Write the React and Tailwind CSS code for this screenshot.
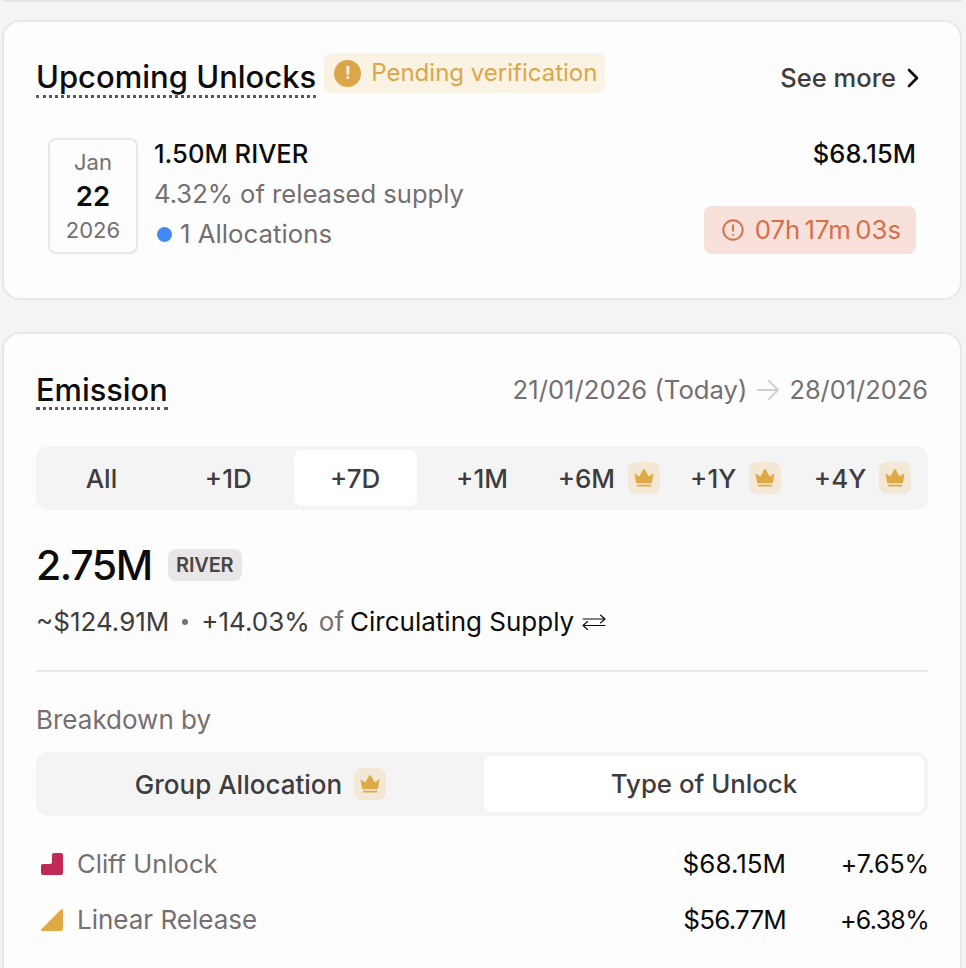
const FONT = "font-['Inter',sans-serif]";

function Crown({ className = "" }) {
  return (
    <span className={`flex h-8 w-8 shrink-0 items-center justify-center rounded-lg bg-[#f2e8d5] ${className}`}>
      <svg width="20" height="20" viewBox="0 0 20 20" fill="#dfa945">
        <path d="M.5 5.2 5.4 8.4 9.2 1.6a.9.9 0 0 1 1.6 0l3.8 6.8 4.9-3.2-1.6 9.5a.8.8 0 0 1-.8.6H2.9a.8.8 0 0 1-.8-.6Z" />
        <rect x="3" y="16.8" width="14" height="1.7" rx="0.4" />
      </svg>
    </span>
  );
}

function Tab({ label, active, crown }) {
  return (
    <div className={`flex h-[56px] flex-1 items-center justify-center gap-[13px] rounded-lg text-[26px] font-medium text-[#3f3c3d] ${active ? "bg-white" : ""}`}>
      <span>{label}</span>
      {crown && <Crown />}
    </div>
  );
}

function Row({ icon, label, usd, pct, labelClass, usdClass, pctClass }) {
  return (
    <div className="flex h-[56px] items-center">
      <span className="ml-[5px] flex w-[36px] shrink-0 items-center">{icon}</span>
      <span className={`flex-1 leading-[32px] text-[#766e70] ${labelClass}`}>{label}</span>
      <span className={`text-[26px] leading-[32px] text-[#0d0c0c] ${usdClass}`}>{usd}</span>
      <span className={`mr-[-1px] w-[143px] text-right text-[25px] leading-[32px] text-[#0d0c0c] ${pctClass}`}>{pct}</span>
    </div>
  );
}

export default function App() {
  return (
    <div className={`${FONT} h-[968px] w-[966px] overflow-hidden bg-[#f4f4f4] pr-[4px] pl-[2px]`}>
      <div className="h-[2px] rounded-b-lg border-b-2 border-[#e6e6e6] bg-[#fdfdfd]" />

      <section className="mt-[18px] h-[280px] rounded-[18px] border-2 border-[#e8e8e8] bg-[#fdfdfd] px-[32px]">
        <div className="flex items-start pt-[30px]">
          <h2 className="mt-[7px] border-b-[3px] border-dotted border-[#5c5757] text-[31px] leading-[36px] font-medium text-[#0d0c0c]">
            Upcoming Unlocks
          </h2>
          <div className="mt-[1px] ml-[8px] flex h-[40px] items-center gap-[10px] rounded-lg bg-[#faf2e3] pr-[8px] pl-[10px]">
            <span className="flex h-[27px] w-[27px] items-center justify-center rounded-full bg-[#dba64a] text-[17px] leading-none font-bold text-[#faf2e3]">!</span>
            <span className="text-[24px] text-[#dba64a]">Pending verification</span>
          </div>
          <div className="mt-[8px] mr-[8px] ml-auto flex items-center gap-[10px]">
            <span className="text-[25.5px] leading-[36px] font-medium text-[#3f3c3d]">See more</span>
            <svg width="14" height="22" viewBox="0 0 14 22" fill="none" stroke="#0d0c0c" strokeWidth="2.6" strokeLinecap="round" strokeLinejoin="round">
              <path d="M3 3l8 8-8 8" />
            </svg>
          </div>
        </div>

        <div className="mt-[36px] flex items-start pl-[12px]">
          <div className="mt-[4px] flex h-[116px] w-[90px] shrink-0 flex-col items-center justify-center rounded-lg border-2 border-[#e8e8e8] text-[#766e70]">
            <span className="text-[22px] leading-[33px]">Jan</span>
            <span className="text-[27.5px] leading-[34px] font-semibold text-[#0d0c0c]">22</span>
            <span className="mt-[1px] text-[22px] leading-[33px]">2026</span>
          </div>
          <div className="ml-[16px] flex flex-col">
            <span className="text-[25.6px] leading-[40px] font-medium text-[#0d0c0c]">1.50M RIVER</span>
            <span className="text-[25.6px] leading-[40px] text-[#766e70]">4.32% of released supply</span>
            <span className="flex items-center gap-[8px] text-[25.8px] leading-[40px] text-[#766e70]">
              <span className="ml-[3px] h-[15px] w-[15px] rounded-full bg-[#4389f5]" />
              1 Allocations
            </span>
          </div>
          <div className="mr-[12px] ml-auto flex flex-col items-end">
            <span className="text-[25.5px] leading-[40px] font-medium text-[#0d0c0c]">$68.15M</span>
            <div className="mt-[32px] flex h-[48px] items-center gap-[11px] rounded-lg bg-[#f7e1da] pr-[15px] pl-[18px] text-[25.8px] text-[#d4704a]">
              <svg width="22" height="22" viewBox="0 0 22 22" fill="none" stroke="#d4704a" strokeWidth="1.9" strokeLinecap="round">
                <circle cx="11" cy="11" r="9.7" />
                <path d="M11 6.2v5.6M11 15.6v.2" />
              </svg>
              <span className="[word-spacing:-3px]">07h 17m 03s</span>
            </div>
          </div>
        </div>
      </section>

      <section className="mt-[32px] h-[700px] rounded-[18px] border-2 border-[#e8e8e8] bg-[#fdfdfd] px-[32px] pt-[38px]">
        <div className="flex items-start justify-between">
          <h2 className="border-b-[3px] border-dotted border-[#5c5757] text-[30.8px] leading-[35px] font-medium text-[#0d0c0c]">
            Emission
          </h2>
          <div className="flex h-[36px] items-center text-[25.7px] text-[#766e70]">
            <span>21/01/2026 (Today)</span>
            <svg className="mx-[9px]" width="24" height="22" viewBox="0 0 24 22" fill="none" stroke="#d3cfd0" strokeWidth="2" strokeLinecap="round" strokeLinejoin="round">
              <path d="M2 11h20M13 2l9 9-9 9" />
            </svg>
            <span className="text-[25.4px]">28/01/2026</span>
          </div>
        </div>

        <div className="mt-[36px] flex h-[64px] items-center gap-[4px] rounded-xl bg-[#f4f4f4] px-[4px]">
          <Tab label="All" />
          <Tab label="+1D" />
          <Tab label="+7D" active />
          <Tab label="+1M" />
          <Tab label="+6M" crown />
          <Tab label="+1Y" crown />
          <Tab label="+4Y" crown />
        </div>

        <div className="mt-[30px] flex items-center gap-[16px]">
          <span className="text-[41px] leading-[50px] font-medium tracking-[-1.4px] text-[#0d0c0c]">2.75M</span>
          <span className="flex h-[32px] w-[74px] items-center justify-center rounded-lg bg-[#e8e6e6] text-[20px] font-semibold tracking-[-0.2px] text-[#4a4647]">RIVER</span>
        </div>

        <div className="mt-[12px] flex items-center text-[26px] leading-[40px]">
          <span className="text-[#3f3c3d]">~$124.91M</span>
          <span className="mx-[13px] h-[6px] w-[6px] rounded-full bg-[#766e70]" />
          <span className="text-[#3f3c3d]">+14.03%</span>
          <span className="ml-[9px] text-[#766e70]">of</span>
          <span className="ml-[6px] text-[#0d0c0c]">Circulating Supply</span>
          <svg className="ml-[8px]" width="24" height="20" viewBox="0 0 24 20" fill="none" stroke="#0d0c0c" strokeWidth="1.1" strokeLinecap="round" strokeLinejoin="round">
            <path d="M1 7h22M18.5 3l4.5 4-4.5 4M23 13.5H1M5.5 9.5l-4.5 4 4.5 4" />
          </svg>
        </div>

        <div className="mt-[28px] h-[2px] bg-[#e8e8e8]" />

        <p className="mt-[28px] text-[26px] leading-[40px] text-[#766e70]">Breakdown by</p>

        <div className="mt-[12px] flex h-[64px] items-center rounded-xl bg-[#f4f4f4] px-[4px]">
          <div className="flex h-[56px] flex-1 items-center justify-center gap-[12px] pr-[3px] text-[26px] font-medium text-[#3f3c3d]">
            <span>Group Allocation</span>
            <Crown />
          </div>
          <div className="flex h-[56px] w-[440px] items-center justify-center rounded-lg bg-white text-[25.8px] font-medium text-[#3f3c3d]">
            Type of Unlock
          </div>
        </div>

        <div className="mt-[20px]">
          <Row
            label="Cliff Unlock"
            labelClass="text-[25.6px]"
            usd="$68.15M"
            usdClass="tracking-[0px]"
            pct="+7.65%"
            pctClass="tracking-[-0.1px]"
            icon={
              <svg width="22" height="22" viewBox="0 0 22 22" fill="#c02a56">
                <path d="M11 2a2 2 0 0 1 2-2h7a2 2 0 0 1 2 2v18a2 2 0 0 1-2 2H2a2 2 0 0 1-2-2v-7a2 2 0 0 1 2-2h7a2 2 0 0 0 2-2Z" />
              </svg>
            }
          />
          <Row
            label="Linear Release"
            labelClass="text-[26px]"
            usd="$56.77M"
            usdClass="tracking-[-0.8px]"
            pct="+6.38%"
            pctClass="tracking-[-0.7px]"
            icon={
              <svg width="22" height="22" viewBox="0 0 22 22" fill="#dfa945">
                <path d="M20 .6a1.2 1.2 0 0 1 2 1V20a2 2 0 0 1-2 2H1a1 1 0 0 1-.7-1.8Z" />
              </svg>
            }
          />
        </div>
      </section>
    </div>
  );
}
